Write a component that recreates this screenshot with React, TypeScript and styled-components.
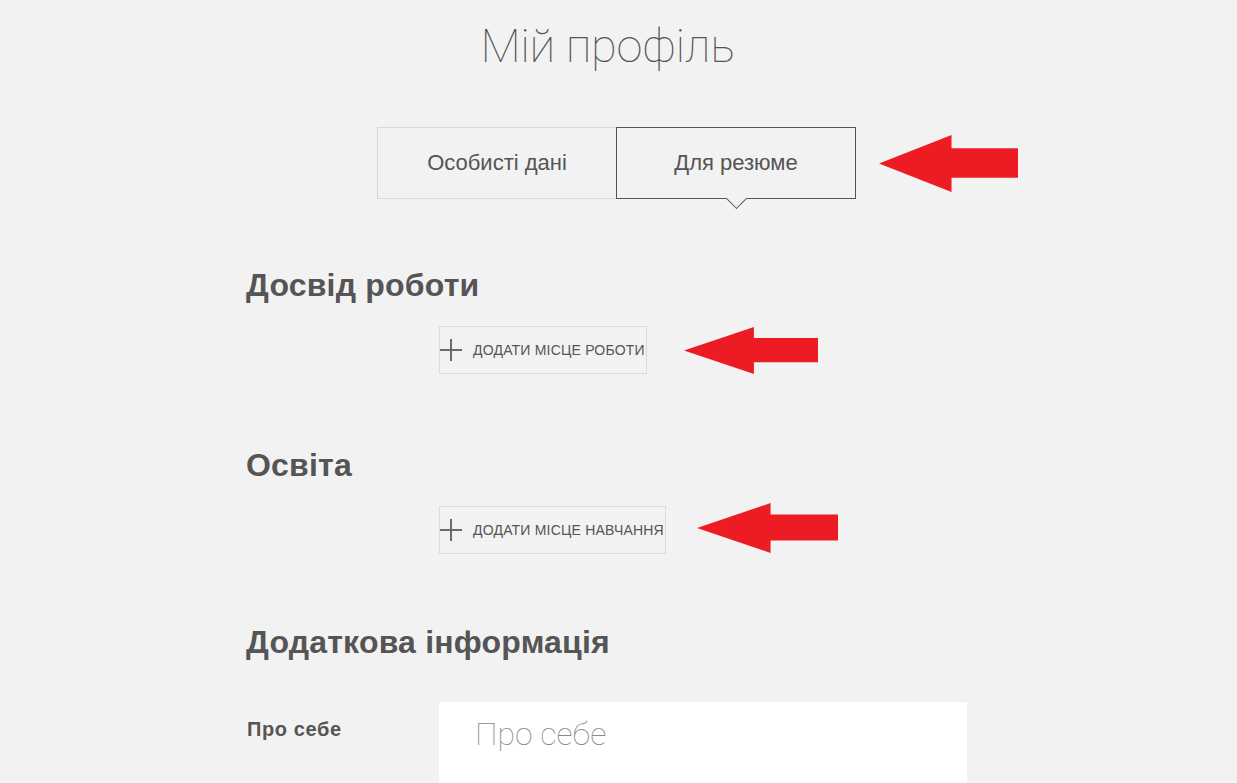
import styled, { createGlobalStyle } from "styled-components";

const GlobalStyle = createGlobalStyle`
  html, body {
    margin: 0;
    padding: 0;
    background: #f2f2f2;
    font-family: "Liberation Sans", Arial, sans-serif;
    color: #555555;
  }
  * {
    box-sizing: border-box;
  }
`;

interface ArrowProps {
  width: number;
  height: number;
}

// червона стрілка-вказівник (анотація на скріншоті)
const RedArrow = ({ width, height }: ArrowProps) => (
  <svg width={width} height={height} viewBox="0 0 138 56" preserveAspectRatio="none">
    <polygon points="0,28 72,0 72,13 138,13 138,42 72,42 72,56" fill="#ed1c24" />
  </svg>
);

const PlusIcon = () => (
  <svg width="22" height="22" viewBox="0 0 22 22">
    <path d="M11 0 V22 M0 11 H22" stroke="#6b6b6b" strokeWidth="2" fill="none" />
  </svg>
);

const App = () => {
  return (
    <>
      <GlobalStyle />
      <Page>
        <Title>Мій профіль</Title>

        <TabsRow>
          <Tabs>
            <Tab>Особисті дані</Tab>
            <Tab $active>Для резюме</Tab>
            <TabArrow>
              <RedArrow width={139} height={57} />
            </TabArrow>
          </Tabs>
        </TabsRow>

        <SectionTitle $top={67}>Досвід роботи</SectionTitle>
        <AddRow $gap={37}>
          <AddButton>
            <PlusIcon />
            <span>Додати місце роботи</span>
          </AddButton>
          <RedArrow width={134} height={47} />
        </AddRow>

        <SectionTitle $top={72}>Освіта</SectionTitle>
        <AddRow $gap={31}>
          <AddButton>
            <PlusIcon />
            <span>Додати місце навчання</span>
          </AddButton>
          <ArrowShift>
            <RedArrow width={141} height={50} />
          </ArrowShift>
        </AddRow>

        <SectionTitle $top={69}>Додаткова інформація</SectionTitle>
        <FieldRow>
          <FieldLabel>Про себе</FieldLabel>
          <TextArea placeholder="Про себе" />
        </FieldRow>
      </Page>
    </>
  );
};

const Page = styled.div`
  max-width: 745px;
  margin: 0 auto;
  padding-top: 18px;
  display: flex;
  flex-direction: column;
`;

const Title = styled.h1`
  margin: 0;
  padding-right: 22px;
  text-align: center;
  font-family: Roboto, "Liberation Sans", sans-serif;
  font-weight: 100;
  font-size: 47px;
  letter-spacing: -0.4px;
  line-height: 56px;
  color: #555555;
`;

const TabsRow = styled.div`
  margin-top: 53px;
  display: flex;
  justify-content: center;
  padding-right: 4px;
`;

const Tabs = styled.div`
  display: flex;
  position: relative;
`;

const Tab = styled.div<{ $active?: boolean }>`
  width: 240px;
  height: 72px;
  display: flex;
  align-items: center;
  justify-content: center;
  font-size: 22px;
  color: #555555;
  position: relative;
  border: 1px solid ${(p) => (p.$active ? "#555555" : "#d9d9d9")};
  margin-left: ${(p) => (p.$active ? "-1px" : "0")};
  z-index: ${(p) => (p.$active ? 1 : 0)};

  ${(p) =>
    p.$active &&
    `
    &::after {
      content: "";
      position: absolute;
      left: 50%;
      bottom: -8px;
      width: 14px;
      height: 14px;
      margin-left: -7px;
      background: #f2f2f2;
      border-right: 1px solid #555555;
      border-bottom: 1px solid #555555;
      transform: rotate(45deg);
    }
  `}
`;

const TabArrow = styled.div`
  position: absolute;
  left: calc(100% + 23px);
  top: 8px;
  display: flex;
`;

const SectionTitle = styled.h2<{ $top: number }>`
  margin: ${(p) => p.$top}px 0 0 0;
  font-size: 32px;
  line-height: 38px;
  font-weight: bold;
  letter-spacing: 0.2px;
  color: #555555;
`;

const AddRow = styled.div<{ $gap: number }>`
  margin-top: 22px;
  padding-left: 193px;
  display: flex;
  align-items: center;
  gap: ${(p) => p.$gap}px;
`;

const AddButton = styled.button`
  height: 48px;
  display: flex;
  align-items: center;
  gap: 11px;
  padding: 0 1px 0 0;
  background: transparent;
  border: 1px solid #dadada;
  font-family: "Liberation Sans", Arial, sans-serif;
  font-size: 14px;
  letter-spacing: 0.2px;
  color: #555555;
  text-transform: uppercase;
  cursor: pointer;
`;

const ArrowShift = styled.div`
  display: flex;
  margin-top: -5px;
`;

const FieldRow = styled.div`
  margin-top: 41px;
  display: flex;
  align-items: flex-start;
`;

const FieldLabel = styled.label`
  width: 193px;
  padding: 15px 0 0 1px;
  font-size: 20px;
  line-height: 24px;
  font-weight: bold;
  letter-spacing: 0.6px;
  color: #555555;
`;

const TextArea = styled.textarea`
  width: 528px;
  height: 82px;
  border: none;
  outline: none;
  resize: none;
  background: #ffffff;
  padding: 10px 36px;
  font-family: Roboto, "Liberation Sans", sans-serif;
  font-weight: 100;
  font-size: 32px;
  line-height: 44px;
  color: #555555;

  &::placeholder {
    color: #8a8a8a;
  }
`;

export default App;
